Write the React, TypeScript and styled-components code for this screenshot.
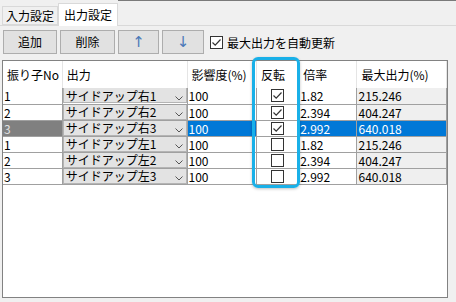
import React from 'react';
import styled, { createGlobalStyle } from 'styled-components';

const GlobalStyle = createGlobalStyle`
  html, body {
    margin: 0;
    padding: 0;
    background: #f0f0f0;
  }
  body {
    font-family: "Noto Sans CJK JP", "Noto Sans", sans-serif;
    font-size: 12px;
    color: #000;
  }
`;

interface Row {
  no: number;
  output: string;
  influence: number;
  invert: boolean;
  ratio: string;
  max: string;
}

const rows: Row[] = [
  { no: 1, output: 'サイドアップ右1', influence: 100, invert: true, ratio: '1.82', max: '215.246' },
  { no: 2, output: 'サイドアップ右2', influence: 100, invert: true, ratio: '2.394', max: '404.247' },
  { no: 3, output: 'サイドアップ右3', influence: 100, invert: true, ratio: '2.992', max: '640.018' },
  { no: 1, output: 'サイドアップ左1', influence: 100, invert: false, ratio: '1.82', max: '215.246' },
  { no: 2, output: 'サイドアップ左2', influence: 100, invert: false, ratio: '2.394', max: '404.247' },
  { no: 3, output: 'サイドアップ左3', influence: 100, invert: false, ratio: '2.992', max: '640.018' },
];

const SELECTED = 2;

const columns = [
  { title: '振り子No', width: 59 },
  { title: '出力', width: 124 },
  { title: '影響度(%)', width: 69 },
  { title: '反転', width: 42 },
  { title: '倍率', width: 58 },
  { title: '最大出力(%)', width: 89 },
];

const Window = styled.div`
  position: relative;
  width: 456px;
  height: 302px;
  overflow: hidden;
  background: #f0f0f0;
`;

const TabStrip = styled.div`
  display: flex;
  align-items: flex-end;
  height: 26px;
  padding-left: 2px;
  box-sizing: border-box;
  border-bottom: 1px solid #d9d9d9;
`;

const Tab = styled.div<{ $active?: boolean }>`
  box-sizing: border-box;
  height: ${p => (p.$active ? '23px' : '19px')};
  margin-bottom: ${p => (p.$active ? '-1px' : '0')};
  padding: ${p => (p.$active ? '0 5px' : '0 3px')};
  display: flex;
  align-items: center;
  background: ${p => (p.$active ? '#fff' : '#f0f0f0')};
  border: 1px solid #d9d9d9;
  border-bottom: ${p => (p.$active ? 'none' : '1px solid #d9d9d9')};
  font-size: 12px;
  line-height: 1;
`;

const TabFill = styled.div`
  flex: 1;
  align-self: stretch;
  border-top: 1px solid #7a7a7a;
`;

const Toolbar = styled.div`
  display: flex;
  align-items: center;
  gap: 3px;
  padding: 4px 3px 0;
  height: 24px;
`;

const Button = styled.button<{ $w: number; $arrow?: boolean }>`
  width: ${p => p.$w}px;
  height: 24px;
  box-sizing: border-box;
  background: #e1e1e1;
  border: 1px solid #adadad;
  font-family: ${p => (p.$arrow ? '"DejaVu Sans", sans-serif' : 'inherit')};
  font-size: ${p => (p.$arrow ? '15px' : '12px')};
  color: ${p => (p.$arrow ? '#4a78b8' : '#000')};
  padding: 0;
  line-height: 1;
`;

const AutoCheck = styled.label`
  display: flex;
  align-items: center;
  gap: 4px;
  margin-left: 3px;
  font-size: 12px;
`;

const Box = styled.span`
  width: 13px;
  height: 13px;
  box-sizing: border-box;
  border: 1px solid #333;
  background: #fff;
  display: inline-flex;
  align-items: center;
  justify-content: center;
`;

const Grid = styled.div`
  margin: 6px 8px 0 2px;
  height: 238px;
  box-sizing: border-box;
  border: 1px solid #828282;
  background: #fff;
`;

const Table = styled.table`
  border-collapse: collapse;
  table-layout: fixed;
  width: 444px;
`;

const HeadCell = styled.th<{ $w: number }>`
  width: ${p => p.$w}px;
  height: 27px;
  padding: 0 0 0 4px;
  box-sizing: border-box;
  text-align: left;
  font-weight: normal;
  font-size: 12px;
  background: #fff;
  border-right: 1px solid #e5e5e5;
  white-space: nowrap;
  overflow: hidden;
`;

const Cell = styled.td<{ $bg: string; $fg: string }>`
  height: 16px;
  padding: 0 0 0 1px;
  box-sizing: border-box;
  background: ${p => p.$bg};
  color: ${p => p.$fg};
  border-right: 1px solid #a0a0a0;
  border-bottom: 1px solid #a0a0a0;
  font-size: 12px;
  line-height: 15px;
  white-space: nowrap;
  overflow: hidden;
`;

const CheckCell = styled(Cell)`
  padding: 0;
  text-align: center;
  vertical-align: middle;
  line-height: 0;
`;

const Combo = styled.div`
  height: 15px;
  box-sizing: border-box;
  margin-left: -1px;
  display: flex;
  align-items: center;
  justify-content: space-between;
  background: #e3e3e3;
  border: 1px solid #b4b4b4;
  border-top: none;
  padding: 0 3px 0 2px;
  color: #000;
`;

const Chevron = styled.svg`
  margin-top: 6px;
`;

const Highlight = styled.div`
  position: absolute;
  left: 252px;
  top: 57px;
  width: 48px;
  height: 131px;
  box-sizing: border-box;
  border: 3px solid #19b0e8;
  border-radius: 6px;
  box-shadow: 0 1px 3px rgba(0, 0, 0, 0.25);
  pointer-events: none;
`;

const Check = () => (
  <svg width="11" height="11" viewBox="0 0 11 11">
    <path d="M1.5 5.5 L4.2 8.2 L9.5 2.5" fill="none" stroke="#333" strokeWidth="1.2" />
  </svg>
);

const CheckBox = ({ checked }: { checked: boolean }) => (
  <Box>{checked && <Check />}</Box>
);

export default function App() {
  return (
    <Window>
      <GlobalStyle />
      <TabStrip>
        <Tab>入力設定</Tab>
        <Tab $active>出力設定</Tab>
        <TabFill />
      </TabStrip>
      <Toolbar>
        <Button $w={54}>追加</Button>
        <Button $w={55}>削除</Button>
        <Button $w={41} $arrow>↑</Button>
        <Button $w={42} $arrow>↓</Button>
        <AutoCheck>
          <CheckBox checked />
          最大出力を自動更新
        </AutoCheck>
      </Toolbar>
      <Grid>
        <Table>
          <thead>
            <tr>
              {columns.map(c => (
                <HeadCell key={c.title} $w={c.width}>{c.title}</HeadCell>
              ))}
            </tr>
          </thead>
          <tbody>
            {rows.map((r, i) => {
              const sel = i === SELECTED;
              const bg = sel ? '#0078d7' : '#fff';
              const fg = sel ? '#fff' : '#000';
              return (
                <tr key={i}>
                  <Cell $bg={sel ? '#808080' : '#fff'} $fg={sel ? '#e0e0e0' : '#000'}>{r.no}</Cell>
                  <Cell $bg="#fff" $fg="#000">
                    <Combo>
                      {r.output}
                      <Chevron width="8" height="5" viewBox="0 0 8 5">
                        <path d="M0.5 0.5 L4 4 L7.5 0.5" fill="none" stroke="#555" strokeWidth="1" />
                      </Chevron>
                    </Combo>
                  </Cell>
                  <Cell $bg={bg} $fg={fg}>{r.influence}</Cell>
                  <CheckCell $bg="#fff" $fg="#000">
                    <CheckBox checked={r.invert} />
                  </CheckCell>
                  <Cell $bg={bg} $fg={fg}>{r.ratio}</Cell>
                  <Cell $bg={sel ? '#0078d7' : '#efefef'} $fg={fg}>{r.max}</Cell>
                </tr>
              );
            })}
          </tbody>
        </Table>
      </Grid>
      <Highlight />
    </Window>
  );
}
